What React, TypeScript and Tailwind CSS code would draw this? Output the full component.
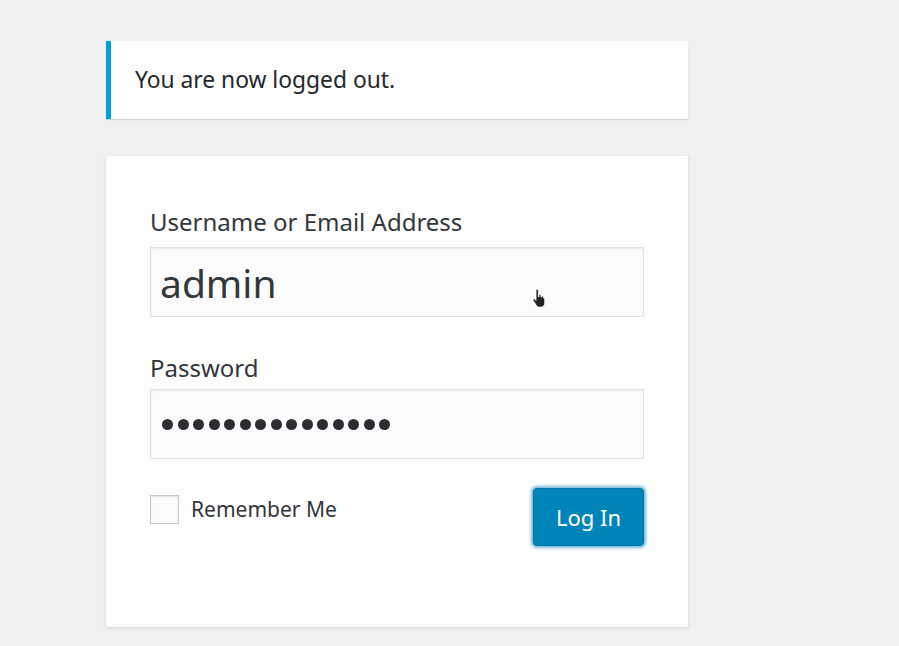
import React from "react";

const font = { fontFamily: '"Noto Sans", "Open Sans", Arial, sans-serif' };

function HandCursor() {
  return (
    <svg width="16" height="20" viewBox="0 0 16 20" className="absolute left-[531px] top-[289px]">
      <path
        d="M5 1.5c0-.8.6-1.3 1.2-1.3s1.2.5 1.2 1.3V8l.4-.1V6.6c0-.7.5-1.1 1.1-1.1s1.1.4 1.1 1.1v1.6l.3-.1c0-.6.5-1 1-1s1.1.4 1.1 1v1l.2-.1c.6 0 1.1.4 1.1 1v4.2c0 2.3-1.6 3.9-3.8 3.9H8.5c-1.4 0-2.4-.6-3.2-1.7L2.2 11.6c-.4-.6-.3-1.3.2-1.6.5-.4 1.2-.3 1.6.2L5 11.4z"
        fill="#222"
        stroke="#fff"
        strokeWidth="0.8"
      />
    </svg>
  );
}

export default function App() {
  return (
    <div className="relative min-h-[646px] w-full bg-[#f1f1f1] text-[#32373c]" style={font}>
      <div className="ml-[106px] w-[582px] pt-[41px]">
        {/* notice */}
        <div className="flex h-[78px] items-center border-l-[5px] border-[#00a0d2] bg-[#fdfdfc] pl-[24px] shadow-[0_1px_1px_rgba(0,0,0,0.12)]">
          <p className="text-[22.8px] text-[#23282d]">You are now logged out.</p>
        </div>

        {/* login form */}
        <form className="mt-[37px] h-[471px] bg-[#fdfdfc] px-[44px] pt-[50px] shadow-[0_1px_3px_rgba(0,0,0,0.13)]">
          <label className="block text-[24px] leading-[32px] text-[#32373c]">Username or Email Address</label>
          <div className="mt-[9px] flex h-[70px] w-[494px] items-center border border-[#e2e2e2] bg-[#fbfbfb] px-[9px] shadow-[inset_0_1px_2px_rgba(0,0,0,0.07)]">
            <span className="text-[39px] leading-none text-[#32373c]">admin</span>
          </div>

          <label className="mt-[35px] block text-[24px] leading-[32px] text-[#32373c]">Password</label>
          <div className="mt-[5px] flex h-[70px] w-[494px] items-center border border-[#e2e2e2] bg-[#fbfbfb] pl-[11px] shadow-[inset_0_1px_2px_rgba(0,0,0,0.07)]">
            <div className="flex gap-[4.5px]">
              {Array.from({ length: 15 }).map((_, i) => (
                <span key={i} className="block h-[11px] w-[11px] rounded-full bg-[#2a2e33]" />
              ))}
            </div>
          </div>

          <div className="mt-[29px] flex w-[494px] items-start justify-between">
            <div className="mt-[6px] flex items-center gap-[12px]">
              <span className="block h-[29px] w-[29px] border border-[#c8c8c8] bg-[#fbfbfb] shadow-[inset_0_1px_2px_rgba(0,0,0,0.1)]" />
              <span className="text-[21px] text-[#32373c]">Remember Me</span>
            </div>
            <button
              type="button"
              className="h-[58px] w-[111px] rounded-[4px] border border-[#0073aa] bg-[#0085ba] text-[22px] text-white shadow-[0_0_3px_2px_rgba(30,140,190,0.6)]"
            >
              Log In
            </button>
          </div>
        </form>
      </div>
      <HandCursor />
    </div>
  );
}
